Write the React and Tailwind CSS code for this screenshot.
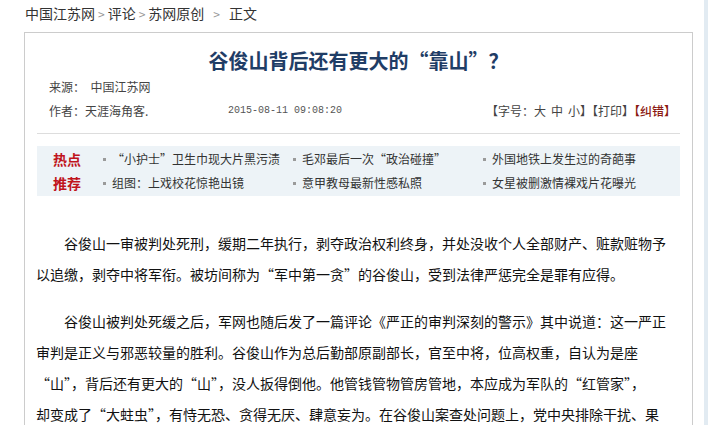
import React from 'react';

const hotRows = [
  {
    label: '热点',
    items: ['“小护士”卫生巾现大片黑污渍', '毛邓最后一次“政治碰撞”', '外国地铁上发生过的奇葩事'],
  },
  {
    label: '推荐',
    items: ['组图：上戏校花惊艳出镜', '意甲教母最新性感私照', '女星被删激情裸戏片花曝光'],
  },
];

// line breaks kept as in the original page
const paragraphs = [
  [
    '谷俊山一审被判处死刑，缓期二年执行，剥夺政治权利终身，并处没收个人全部财产、赃款赃物予',
    '以追缴，剥夺中将军衔。被坊间称为“军中第一贪”的谷俊山，受到法律严惩完全是罪有应得。',
  ],
  [
    '谷俊山被判处死缓之后，军网也随后发了一篇评论《严正的审判深刻的警示》其中说道：这一严正',
    '审判是正义与邪恶较量的胜利。谷俊山作为总后勤部原副部长，官至中将，位高权重，自认为是座',
    '“山”，背后还有更大的“山”，没人扳得倒他。他管钱管物管房管地，本应成为军队的“红管家”，',
    '却变成了“大蛀虫”，有恃无恐、贪得无厌、肆意妄为。在谷俊山案查处问题上，党中央排除干扰、果',
  ],
];

const Crumb = ({ children }) => <span className="text-[#333]">{children}</span>;
const Sep = () => <span className="text-[#999] text-[12px] mx-[3px]">&gt;</span>;

export default function App() {
  return (
    <div className="relative w-[708px] h-[425px] overflow-hidden bg-white font-['Noto_Sans_CJK_SC','Liberation_Sans',sans-serif] text-[#333]">
      {/* right scroll edge */}
      <div className="absolute right-0 top-0 h-full w-[4px] bg-[#e2ebf2]" />

      {/* breadcrumb */}
      <div className="h-[32px] pt-[4px] pl-[25px] text-[14px] leading-[18px] whitespace-nowrap">
        <Crumb>中国江苏网</Crumb>
        <Sep />
        <Crumb>评论</Crumb>
        <Sep />
        <Crumb>苏网原创</Crumb>
        <span className="mx-[6px]"><Sep /></span>
        <Crumb>正文</Crumb>
      </div>

      <div className="ml-[24px] w-[669px] h-[400px] border border-b-0 border-[#cccccc]">
        <h1 className="pt-[14px] text-center text-[20px] leading-[28px] font-bold text-[#1f3d66]">
          谷俊山背后还有更大的“靠山”？
        </h1>

        <div className="pl-[24px] pr-[16px] text-[12px] text-[#444]">
          <div className="h-[24px] leading-[24px]">来源：&nbsp;&nbsp;中国江苏网</div>
          <div className="flex h-[24px] leading-[24px] items-center">
            <span className="w-[179px]">作者：天涯海角客.</span>
            <span className="font-['Liberation_Mono',monospace] text-[10px] text-[#555]">
              2015-08-11 09:08:20
            </span>
            <span className="ml-auto text-[#444] whitespace-nowrap">
              【字号：大<span className="mx-[5px]">中</span>小】【打印】
              <span className="text-[#8c1a12] font-medium">【纠错】</span>
            </span>
          </div>
        </div>

        <div className="mx-[12px] mt-[10px] h-px bg-[#dddddd]" />

        <div className="mx-[12px] mt-[12px] py-[1px] bg-[#edf3f7]">
          {hotRows.map((row) => (
            <div key={row.label} className="flex h-[24px] items-center">
              <span className="w-[63px] pl-[16px] text-[14px] font-bold text-[#c0141c]">{row.label}</span>
              <div className="grid grid-cols-3 w-[570px]">
                {row.items.map((item) => (
                  <div key={item} className="flex items-center text-[12px] text-[#333] whitespace-nowrap">
                    <span className="w-[3px] h-[3px] bg-[#9a9a9a] ml-[3px] mr-[6px]" />
                    {item}
                  </div>
                ))}
              </div>
            </div>
          ))}
        </div>

        <div className="pl-[11px] pr-[20px] mt-[32px] text-[14px] leading-[31px] text-[#111] whitespace-nowrap">
          {paragraphs.map((lines, i) => (
            <p key={i} className="mb-[16px]">
              {lines.map((line, j) => (
                <span key={j} className={j === 0 ? 'block pl-[28px]' : 'block'}>
                  {line}
                </span>
              ))}
            </p>
          ))}
        </div>
      </div>
    </div>
  );
}
